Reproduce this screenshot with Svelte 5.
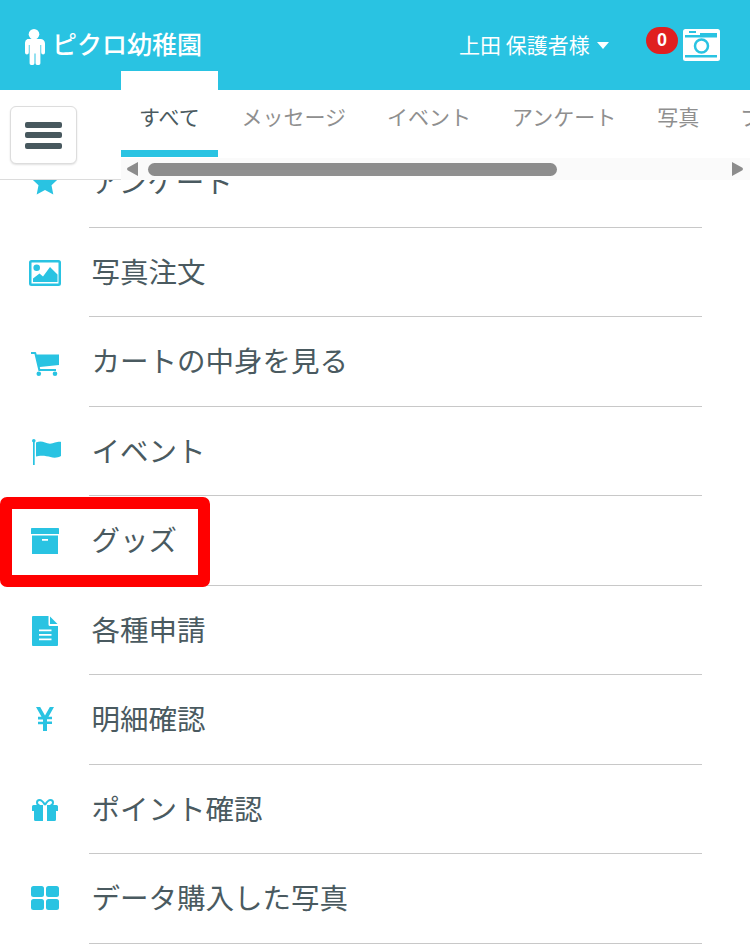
<script>
  const tabs = ['メッセージ', 'イベント', 'アンケート', '写真', 'ブログ'];
  const menu = [
    { key: 'star', label: 'アンケート' },
    { key: 'image', label: '写真注文' },
    { key: 'cart', label: 'カートの中身を見る' },
    { key: 'flag', label: 'イベント' },
    { key: 'box', label: 'グッズ' },
    { key: 'file', label: '各種申請' },
    { key: 'yen', label: '明細確認' },
    { key: 'gift', label: 'ポイント確認' },
    { key: 'grid', label: 'データ購入した写真' }
  ];
</script>

<div class="page">
  <header class="top">
    <div class="brand">
      <svg class="male" viewBox="0 0 22 36" width="22" height="36">
        <circle cx="11" cy="5.300" r="5.300" fill="#fff" />
        <path fill="#fff" d="M4.500 10h13A4.500 4.500 0 0 1 22 14.500V23.500a1.900 1.900 0 0 1-3.800 0V16h-.8v18a1.900 1.900 0 0 1-2 2h-.9a1.900 1.900 0 0 1-2-2V24.500h-1v9.500a1.900 1.900 0 0 1-2 2h-.9a1.900 1.900 0 0 1-2-2V16h-.8v7.500a1.900 1.900 0 0 1-3.800 0V14.500A4.500 4.500 0 0 1 4.500 10z" />
      </svg>
      <span>ピクロ幼稚園</span>
    </div>
    <div class="user">上田 保護者様<i class="caret"></i></div>
    <div class="notice">
      <span class="badge">0</span>
      <svg viewBox="0 0 37 32" width="37" height="32">
        <rect width="37" height="32" rx="2.500" fill="#fff" />
        <rect x="6" y="2" width="7" height="2" fill="#29c3e2" />
        <path d="M2 6h15V4h17v4.500H2z" fill="#29c3e2" />
        <rect x="2" y="26" width="32" height="2.500" fill="#29c3e2" />
        <circle cx="18.500" cy="17" r="6.500" fill="none" stroke="#29c3e2" stroke-width="2.500" />
      </svg>
    </div>
  </header>

  <nav class="bar">
    <button class="burger" aria-label="メニュー"><i></i><i></i><i></i></button>
    <div class="tabwrap">
      <div class="tabs">
        <div class="tab active">すべて</div>
        {#each tabs as t}
          <div class="tab">{t}</div>
        {/each}
      </div>
      <div class="scroll">
        <svg class="arrow" viewBox="0 0 11 14" width="11" height="14"><path d="M11 0v14L1 8.500a1.700 1.700 0 0 1 0-3z" fill="#8c8c8c" /></svg>
        <div class="track"><div class="thumb"></div></div>
        <svg class="arrow" viewBox="0 0 11 14" width="11" height="14"><path d="M0 0v14l10-5.500a1.700 1.700 0 0 0 0-3z" fill="#8c8c8c" /></svg>
      </div>
    </div>
  </nav>

  <ul class="menu">
    {#each menu as m}
      <li class="item">
        <span class="ico {m.key}">
          {#if m.key === 'star'}
            <svg viewBox="0 0 28 28" width="28" height="28"><path d="M14 1l4 8.600 9.400 1.200-6.900 6.500 1.800 9.300L14 22.100l-8.300 4.500 1.800-9.300L.6 10.800 10 9.600z" /></svg>
          {:else if m.key === 'image'}
            <svg viewBox="0 0 32 26" width="32" height="26"><path fill-rule="evenodd" d="M2.500 0h27A2.500 2.500 0 0 1 32 2.500v21a2.500 2.500 0 0 1-2.500 2.500h-27A2.500 2.500 0 0 1 0 23.500v-21A2.500 2.500 0 0 1 2.500 0zm.2 2.500a.3.300 0 0 0-.2.200v20.600a.3.300 0 0 0 .2.200h26.600a.3.300 0 0 0 .2-.2V2.700a.3.300 0 0 0-.2-.2z" /><circle cx="7.700" cy="7.700" r="3.300" /><path d="M4 22v-3.500l6.500-5 3.500 3L21 7l7.500 7.500V22z" /></svg>
          {:else if m.key === 'cart'}
            <svg viewBox="0 0 28 24" width="28" height="24"><path d="M0 0h4.200a1 1 0 0 1 1 .8L5.600 2.500H28v10.500L8.800 15l.4 2H25v2H7.500L3.500 2H0z" /><circle cx="7.800" cy="21.700" r="2.300" /><circle cx="24" cy="21.700" r="2.300" /></svg>
          {:else if m.key === 'flag'}
            <svg viewBox="0 0 29 26" width="29" height="26"><circle cx="1.800" cy="1.800" r="1.800" /><rect x="1" y="2" width="1.700" height="24" /><path d="M4 3.500c3-1.500 6-1.500 9 0s7 1.500 10 0c2-.8 6-1.200 6-.5v14c-3 1.800-7 2.200-10.500 1S8 16 4 17.500z" /></svg>
          {:else if m.key === 'box'}
            <svg viewBox="0 0 28 26" width="28" height="26"><path d="M.8 0h26.400a.800.800 0 0 1 .8.800V6H0V.800A.800.800 0 0 1 .8 0z" /><path fill-rule="evenodd" d="M1 7.500h26V26H1zm10 3.500v1.800h6V11z" /></svg>
          {:else if m.key === 'file'}
            <svg viewBox="0 0 26 30" width="26" height="30"><path fill-rule="evenodd" d="M1 0h15.500v8.500a1.500 1.500 0 0 0 1.500 1.500H26v19a1 1 0 0 1-1 1H1a1 1 0 0 1-1-1V1a1 1 0 0 1 1-1zm6 13.500v1.800h12.500v-1.800zm0 4.500v1.800h12.500V18zm0 4.500v1.800h12.500v-1.800z" /><path d="M18 .5L25.500 8H18z" /></svg>
          {:else if m.key === 'yen'}
            <svg viewBox="0 0 18 24" width="18" height="24"><path d="M0 0h4.200L9 8.500 13.800 0H18l-5.500 9.800H16v2.500h-5v2.300h5v2.500h-5V24H7v-6.700H2v-2.500h5v-2.300H2V9.800h3.500z" /></svg>
          {:else if m.key === 'gift'}
            <svg viewBox="0 0 26 22" width="26" height="22"><path fill-rule="evenodd" d="M1.500 6H11v16H3.500a1.500 1.500 0 0 1-1.500-1.500V12H0V7.500A1.500 1.500 0 0 1 1.500 6zM15 6h9.500A1.500 1.500 0 0 1 26 7.500V12h-2v8.500a1.500 1.500 0 0 1-1.500 1.500H15z" /><path fill="none" stroke="#29c3e2" stroke-width="2" d="M13 6C11 2.500 9 1 7.500 1a2.500 2.500 0 0 0 0 5M13 6c2-3.500 4-5 5.500-5a2.500 2.500 0 0 1 0 5" style="fill:none" /></svg>
          {:else if m.key === 'grid'}
            <svg viewBox="0 0 28 24" width="28" height="24"><rect width="13" height="11" rx="2.500" /><rect x="15" width="13" height="11" rx="2.500" /><rect y="13" width="13" height="11" rx="2.500" /><rect x="15" y="13" width="13" height="11" rx="2.500" /></svg>
          {/if}
        </span>
        <span class="label">{m.label}</span>
      </li>
    {/each}
  </ul>

  <div class="mark"></div>
</div>

<style>
  :global(body) {
    margin: 0;
    background: #fff;
  }
  .page {
    position: relative;
    width: 750px;
    height: 945px;
    overflow: hidden;
    font-family: "Noto Sans CJK JP", "Noto Sans", sans-serif;
    color: #4a5a60;
  }
  .top {
    position: relative;
    z-index: 2;
    height: 90px;
    background: #29c3e2;
    color: #fff;
    display: flex;
    align-items: center;
  }
  .brand {
    display: flex;
    align-items: center;
    gap: 7px;
    margin-left: 23px;
    width: 436px;
    flex: none;
    font-size: 25px;
    font-weight: 500;
    line-height: 36px;
    margin-bottom: 4px;
  }
  .male {
    flex: none;
    margin-top: 8px;
  }
  .user {
    font-size: 21px;
    display: flex;
    align-items: center;
    width: 224px;
    flex: none;
    margin-bottom: 2px;
  }
  .caret {
    margin-left: 7px;
    border-left: 6.500px solid transparent;
    border-right: 6.500px solid transparent;
    border-top: 7px solid #fff;
    margin-top: 2px;
  }
  .notice {
    position: relative;
    width: 37px;
    height: 32px;
    flex: none;
  }
  .notice svg {
    display: block;
  }
  .badge {
    position: absolute;
    right: 42px;
    top: -2px;
    width: 32px;
    height: 27px;
    border-radius: 14px;
    background: #e02020;
    color: #fff;
    font: 700 18px/26px "Liberation Sans", sans-serif;
    text-align: center;
  }
  .bar {
    position: relative;
    z-index: 3;
    height: 90px;
    background: #fff;
    display: flex;
    box-sizing: border-box;
    border-bottom: 1px solid #dcdcdc;
  }
  .burger {
    margin: 16px 44px 0 10px;
    width: 67px;
    height: 58px;
    flex: none;
    padding: 0;
    background: #fff;
    border: 1px solid #ddd;
    border-radius: 6px;
    box-shadow: 0 1px 2px rgba(0, 0, 0, 0.12);
    display: flex;
    flex-direction: column;
    align-items: center;
    justify-content: center;
    gap: 4.500px;
  }
  .burger i {
    display: block;
    width: 37px;
    height: 6px;
    border-radius: 2px;
    background: #47585e;
  }
  .tabwrap {
    position: relative;
    flex: 1;
    min-width: 0;
    height: 90px;
  }
  .tabs {
    display: flex;
    height: 68px;
    white-space: nowrap;
  }
  .tab {
    flex: none;
    box-sizing: border-box;
    height: 60px;
    padding: 0 20.500px;
    font-size: 21px;
    line-height: 52px;
    color: #8f8f8f;
  }
  .tab.active {
    position: relative;
    margin-top: -19px;
    height: 86px;
    padding: 19px 18px 0;
    width: 97px;
    margin-right: 3px;
    color: #4a5a60;
    background: #fff;
    border-bottom: 7px solid #29c3e2;
  }
  .scroll {
    position: absolute;
    left: 0;
    right: 0;
    top: 68px;
    height: 22px;
    background: #fafafa;
    display: flex;
    align-items: center;
    padding: 0 7px 0 6px;
    box-sizing: border-box;
    gap: 10px;
  }
  .arrow {
    flex: none;
  }
  .track {
    flex: 1;
    height: 13px;
  }
  .thumb {
    width: 409px;
    height: 13px;
    border-radius: 7px;
    background: #8c8c8c;
  }
  .menu {
    list-style: none;
    margin: -42px 0 0;
    padding: 0;
    position: relative;
    z-index: 1;
  }
  .item {
    display: flex;
    height: 89.500px;
    align-items: stretch;
  }
  .ico {
    width: 89px;
    flex: none;
    display: flex;
    align-items: center;
    justify-content: center;
    box-sizing: border-box;
  }
  .ico svg {
    fill: #29c3e2;
    display: block;
  }
  .ico.star {
    padding-bottom: 2px;
  }
  .ico.image,
  .ico.file,
  .ico.gift {
    padding-top: 2px;
  }
  .ico.cart {
    padding-top: 4px;
  }
  .ico.flag {
    padding: 2px 0 0 3px;
  }
  .ico.yen,
  .ico.grid {
    padding-bottom: 2px;
  }
  .label {
    width: 613px;
    box-sizing: border-box;
    border-bottom: 1px solid #c8c8c8;
    padding-left: 2.500px;
    font-size: 28.500px;
    line-height: 86px;
  }
  .mark {
    position: absolute;
    z-index: 4;
    left: 0;
    top: 497px;
    width: 210px;
    height: 90px;
    box-sizing: border-box;
    border: 12px solid #ff0000;
    border-radius: 7px;
  }
</style>
